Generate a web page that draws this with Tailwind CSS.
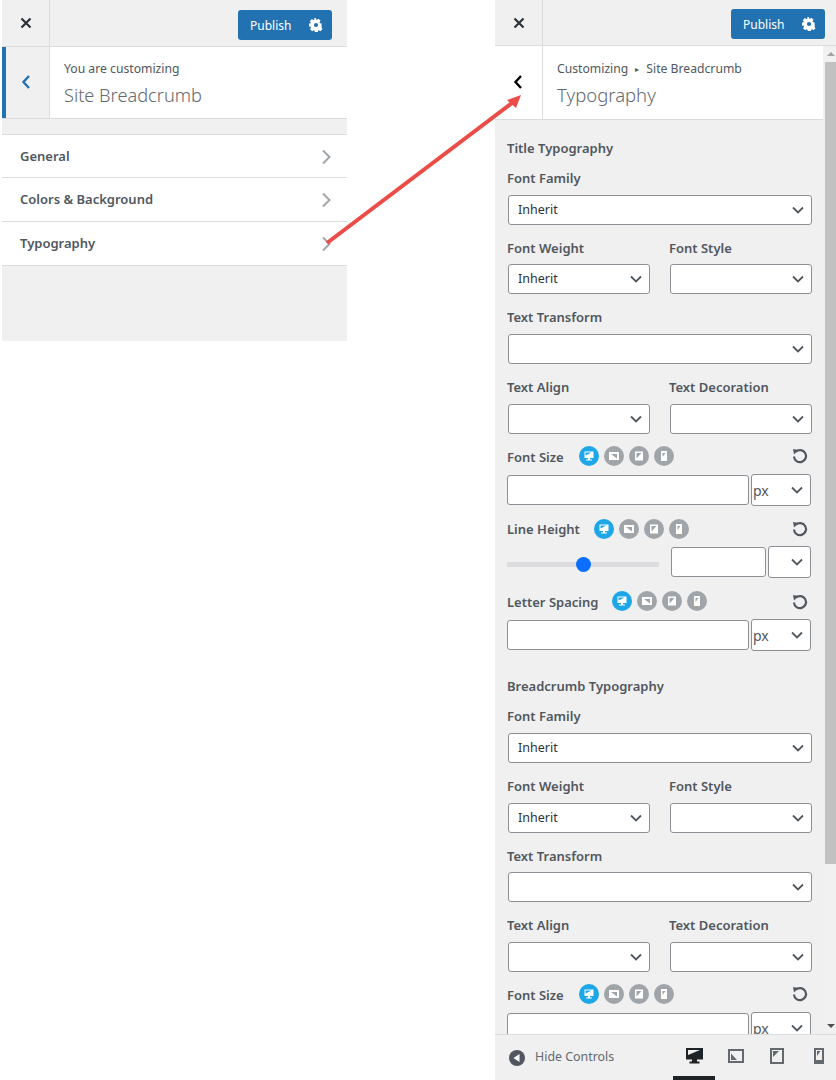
<!DOCTYPE html>
<html>
<head>
    <title>Site Breadcrumb Customizer</title>
    <script src="https://cdn.jsdelivr.net/npm/@tailwindcss/browser@4"></script>
</head>
<body class="bg-white m-0 p-0 font-['Noto_Sans',sans-serif] text-[13px] text-[#50575e]">
<div class="relative w-[836px] h-[1080px] overflow-hidden flex">

    <!-- Left panel -->
    <div class="ml-[2px] w-[345px] h-[341px] bg-[#f0f0f1]">
        <div class="h-[47px] flex items-center border-b border-[#dcdcde]">
            <div class="w-[48px] h-full flex items-center justify-center border-r border-[#dcdcde]">
                <svg class="w-[12px] h-[12px]" viewBox="0 0 12 12"><path d="M1.500 1.500l9 9M10.500 1.500l-9 9" stroke="#2c3338" stroke-width="2.200"/></svg>
            </div>
            <div class="ml-auto mr-[15px] mt-[4px] w-[94px] h-[30px] bg-[#2271b1] rounded-[3px] flex items-center text-white">
                <span class="ml-[12px] mt-[1px] text-[12px]">Publish</span>
                <svg class="ml-auto mr-[9px] w-[14px] h-[14px]" viewBox="0 0 20 20"><path fill="#fff" fill-rule="evenodd" d="M18 12.200v-4.400l-2.400-.4a6 6 0 0 0-.5-1.300l1.400-2-3-3-2 1.400a6 6 0 0 0-1.300-.5L9.800 0H7.800l-.4 2.400a6 6 0 0 0-1.300.5l-2-1.400-3 3 1.400 2a6 6 0 0 0-.5 1.300L0 7.800v4.400l2.400.4c.1.500.3.900.5 1.300l-1.400 2 3 3 2-1.400c.4.200.8.400 1.300.5l.4 2.400h4.400l.4-2.400c.5-.1.900-.3 1.300-.5l2 1.400 3-3-1.400-2c.2-.4.400-.8.5-1.300zM10 13a3 3 0 1 1 0-6 3 3 0 0 1 0 6z"/></svg>
            </div>
        </div>
        <div class="h-[72px] flex bg-white border-b border-[#dcdcde]">
            <div class="w-[48px] pr-[3px] flex items-center justify-center bg-[#f0f0f1] border-l-4 border-r border-l-[#2271b1] border-r-[#dcdcde]">
                <svg class="w-[10px] h-[16px] mb-[2px]" viewBox="0 0 10 16"><path d="M8 2L2.500 8 8 14" fill="none" stroke="#2271b1" stroke-width="2.400"/></svg>
            </div>
            <div class="pl-[14px] pt-[12px]">
                <div class="text-[12.200px] leading-[20px]">You are customizing</div>
                <div class="text-[18.200px] leading-[30px] mt-[1px] font-light text-[#646970]">Site Breadcrumb</div>
            </div>
        </div>
        <div class="mt-[15px] bg-white border-t border-[#dcdcde]">
            <div class="h-[43px] flex items-center justify-between pt-[1px] pl-[18px] pr-[16px] border-b border-[#dcdcde] text-[13px] font-semibold">
                <span>General</span>
                <svg class="w-[10px] h-[16px]" viewBox="0 0 10 16"><path d="M2 1.500L8.500 8 2 14.500" fill="none" stroke="#a0a5aa" stroke-width="2"/></svg>
            </div>
            <div class="h-[44px] flex items-center justify-between pl-[18px] pr-[16px] border-b border-[#dcdcde] text-[13px] font-semibold">
                <span>Colors &amp; Background</span>
                <svg class="w-[10px] h-[16px]" viewBox="0 0 10 16"><path d="M2 1.500L8.500 8 2 14.500" fill="none" stroke="#a0a5aa" stroke-width="2"/></svg>
            </div>
            <div class="h-[44px] flex items-center justify-between pl-[18px] pr-[16px] border-b border-[#dcdcde] text-[13px] font-semibold">
                <span>Typography</span>
                <svg class="w-[10px] h-[16px]" viewBox="0 0 10 16"><path d="M2 1.500L8.500 8 2 14.500" fill="none" stroke="#a0a5aa" stroke-width="2"/></svg>
            </div>
        </div>
    </div>

    <!-- Right panel -->
    <div class="ml-[148px] w-[341px] h-[1080px] bg-[#f0f0f1] flex flex-col">
        <div class="h-[46px] shrink-0 flex items-center border-b border-[#dcdcde]">
            <div class="w-[48px] h-full flex items-center justify-center border-r border-[#dcdcde]">
                <svg class="w-[12px] h-[12px]" viewBox="0 0 12 12"><path d="M1.500 1.500l9 9M10.500 1.500l-9 9" stroke="#2c3338" stroke-width="2.200"/></svg>
            </div>
            <div class="ml-auto mr-[11px] mt-[3px] w-[94px] h-[30px] bg-[#2271b1] rounded-[3px] flex items-center text-white">
                <span class="ml-[12px] mt-[1px] text-[12px]">Publish</span>
                <svg class="ml-auto mr-[9px] w-[14px] h-[14px]" viewBox="0 0 20 20"><path fill="#fff" fill-rule="evenodd" d="M18 12.200v-4.400l-2.400-.4a6 6 0 0 0-.5-1.300l1.400-2-3-3-2 1.400a6 6 0 0 0-1.300-.5L9.800 0H7.800l-.4 2.400a6 6 0 0 0-1.300.5l-2-1.400-3 3 1.400 2a6 6 0 0 0-.5 1.300L0 7.800v4.400l2.400.4c.1.500.3.900.5 1.300l-1.400 2 3 3 2-1.400c.4.200.8.400 1.300.5l.4 2.400h4.400l.4-2.400c.5-.1.900-.3 1.300-.5l2 1.400 3-3-1.400-2c.2-.4.400-.8.5-1.300zM10 13a3 3 0 1 1 0-6 3 3 0 0 1 0 6z"/></svg>
            </div>
        </div>

        <div class="h-[988px] shrink-0 flex overflow-hidden">
            <div class="w-[330px] shrink-0">
                <div class="w-[328px] h-[74px] flex bg-white border-b border-[#dcdcde]">
                    <div class="w-[48px] pr-[1px] flex items-center justify-center border-r border-[#dcdcde]">
                        <svg class="w-[10px] h-[16px] mb-[2px]" viewBox="0 0 10 16"><path d="M8 2L2.500 8 8 14" fill="none" stroke="#000" stroke-width="2.400"/></svg>
                    </div>
                    <div class="pl-[14px] pt-[13px]">
                        <div class="text-[12.200px] leading-[20px] flex items-center">Customizing<span class="mx-[7px] text-[8px]">▸</span>Site Breadcrumb</div>
                        <div class="text-[18.500px] leading-[30px] mt-[1px] font-light text-[#646970]">Typography</div>
                    </div>
                </div>

                <div class="pl-[12px] pr-[13px] text-[13px] font-semibold">
                    <div class="h-[20px] leading-[20px] mt-[18px]">Title Typography</div>
                    <div class="h-[20px] leading-[20px] mt-[10px]">Font Family</div>
                    <div class="ml-[1px] mt-[7px] h-[30px] flex items-center justify-between border border-[#8c8f94] rounded-[3px] bg-white pl-[9px] pr-[7px] font-normal text-[12.500px] text-[#2c3338]"><span class="mt-[1px]">Inherit</span><svg class="w-[12px] h-[8px]" viewBox="0 0 12 8"><path d="M1 1.500l5 5 5-5" fill="none" stroke="#50575e" stroke-width="1.800"/></svg></div>

                    <div class="mt-[13px] ml-[1px] grid grid-cols-2 gap-x-[20px]">
                        <div class="h-[20px] leading-[20px] -ml-[1px]">Font Weight</div>
                        <div class="h-[20px] leading-[20px] -ml-[1px]">Font Style</div>
                        <div class="mt-[6px] h-[30px] flex items-center justify-between border border-[#8c8f94] rounded-[3px] bg-white pl-[9px] pr-[7px] font-normal text-[12.500px] text-[#2c3338]"><span class="mt-[1px]">Inherit</span><svg class="w-[12px] h-[8px]" viewBox="0 0 12 8"><path d="M1 1.500l5 5 5-5" fill="none" stroke="#50575e" stroke-width="1.800"/></svg></div>
                        <div class="mt-[6px] h-[30px] flex items-center justify-end border border-[#8c8f94] rounded-[3px] bg-white pr-[7px]"><svg class="w-[12px] h-[8px]" viewBox="0 0 12 8"><path d="M1 1.500l5 5 5-5" fill="none" stroke="#50575e" stroke-width="1.800"/></svg></div>
                    </div>

                    <div class="h-[20px] leading-[20px] mt-[13px]">Text Transform</div>
                    <div class="ml-[1px] mt-[7px] h-[30px] flex items-center justify-end border border-[#8c8f94] rounded-[3px] bg-white pr-[7px]"><svg class="w-[12px] h-[8px]" viewBox="0 0 12 8"><path d="M1 1.500l5 5 5-5" fill="none" stroke="#50575e" stroke-width="1.800"/></svg></div>

                    <div class="mt-[13px] ml-[1px] grid grid-cols-2 gap-x-[20px]">
                        <div class="h-[20px] leading-[20px] -ml-[1px]">Text Align</div>
                        <div class="h-[20px] leading-[20px] -ml-[1px]">Text Decoration</div>
                        <div class="mt-[7px] h-[30px] flex items-center justify-end border border-[#8c8f94] rounded-[3px] bg-white pr-[7px]"><svg class="w-[12px] h-[8px]" viewBox="0 0 12 8"><path d="M1 1.500l5 5 5-5" fill="none" stroke="#50575e" stroke-width="1.800"/></svg></div>
                        <div class="mt-[7px] h-[30px] flex items-center justify-end border border-[#8c8f94] rounded-[3px] bg-white pr-[7px]"><svg class="w-[12px] h-[8px]" viewBox="0 0 12 8"><path d="M1 1.500l5 5 5-5" fill="none" stroke="#50575e" stroke-width="1.800"/></svg></div>
                    </div>

                    <!-- Font Size -->
                    <div class="mt-[13px] h-[20px] flex items-center">
                        <span class="mr-[15px] mt-[1px]">Font Size</span>
                        <div class="flex gap-[5px] -mt-[2px]">
                            <svg class="w-[20px] h-[20px]" viewBox="0 0 20 20"><circle cx="10" cy="10" r="10" fill="#1da6e8"/><path fill="#fff" fill-rule="evenodd" d="M5.500 5.500h9v6.500h-3.500v1.500h2v1h-6v-1h2V12H5.500zM6.500 6.500v3l6-3z"/></svg>
                            <svg class="w-[20px] h-[20px]" viewBox="0 0 20 20"><circle cx="10" cy="10" r="10" fill="#a0a5aa"/><path fill="#fff" d="M5 6h10v8H5zM7 8l6 4.500V8z" fill-rule="evenodd"/></svg>
                            <svg class="w-[20px] h-[20px]" viewBox="0 0 20 20"><circle cx="10" cy="10" r="10" fill="#a0a5aa"/><path fill="#fff" d="M6 5.500h8v9H6zM7.500 12.500L12.500 7H7.500z" fill-rule="evenodd"/></svg>
                            <svg class="w-[20px] h-[20px]" viewBox="0 0 20 20"><circle cx="10" cy="10" r="10" fill="#a0a5aa"/><path fill="#fff" d="M7 5h6v10H7zM8.500 11L11.500 7H8.500z" fill-rule="evenodd"/></svg>
                        </div>
                        <svg class="ml-auto mr-[4px] -mt-[2px] w-[16px] h-[16px]" viewBox="0 0 16 16"><path d="M3.800 3.800A6 6 0 1 1 2 8.500" fill="none" stroke="#50575e" stroke-width="2.200"/><path fill="#50575e" d="M1 1l5.500 1-4.500 4.500z"/></svg>
                    </div>
                    <div class="mt-[7px] flex items-center gap-[2px]">
                        <input class="w-[242px] h-[30px] border border-[#8c8f94] rounded-[3px] bg-white">
                        <div class="w-[60px] h-[32px] flex items-center justify-between border border-[#8c8f94] rounded-[3px] bg-white pl-[1px] pr-[7px] font-normal text-[14px]">px<svg class="w-[12px] h-[8px]" viewBox="0 0 12 8"><path d="M1 1.500l5 5 5-5" fill="none" stroke="#50575e" stroke-width="1.800"/></svg></div>
                    </div>

                    <!-- Line Height -->
                    <div class="mt-[13px] h-[20px] flex items-center">
                        <span class="mr-[14px] mt-[1px]">Line Height</span>
                        <div class="flex gap-[5px]">
                            <svg class="w-[20px] h-[20px]" viewBox="0 0 20 20"><circle cx="10" cy="10" r="10" fill="#1da6e8"/><path fill="#fff" fill-rule="evenodd" d="M5.500 5.500h9v6.500h-3.500v1.500h2v1h-6v-1h2V12H5.500zM6.500 6.500v3l6-3z"/></svg>
                            <svg class="w-[20px] h-[20px]" viewBox="0 0 20 20"><circle cx="10" cy="10" r="10" fill="#a0a5aa"/><path fill="#fff" d="M5 6h10v8H5zM7 8l6 4.500V8z" fill-rule="evenodd"/></svg>
                            <svg class="w-[20px] h-[20px]" viewBox="0 0 20 20"><circle cx="10" cy="10" r="10" fill="#a0a5aa"/><path fill="#fff" d="M6 5.500h8v9H6zM7.500 12.500L12.500 7H7.500z" fill-rule="evenodd"/></svg>
                            <svg class="w-[20px] h-[20px]" viewBox="0 0 20 20"><circle cx="10" cy="10" r="10" fill="#a0a5aa"/><path fill="#fff" d="M7 5h6v10H7zM8.500 11L11.500 7H8.500z" fill-rule="evenodd"/></svg>
                        </div>
                        <svg class="ml-auto mr-[4px] w-[16px] h-[16px]" viewBox="0 0 16 16"><path d="M3.800 3.800A6 6 0 1 1 2 8.500" fill="none" stroke="#50575e" stroke-width="2.200"/><path fill="#50575e" d="M1 1l5.500 1-4.500 4.500z"/></svg>
                    </div>
                    <div class="mt-[7px] flex items-center">
                        <div class="mt-[4px] w-[152px] h-[5px] bg-[#dcdcde] flex items-center">
                            <div class="ml-[69px] w-[15px] h-[15px] rounded-full bg-[#0b6efd]"></div>
                        </div>
                        <input class="ml-[12px] w-[95px] h-[30px] border border-[#8c8f94] rounded-[3px] bg-white">
                        <div class="ml-[2px] w-[43px] h-[32px] flex items-center justify-end border border-[#8c8f94] rounded-[3px] bg-white pr-[7px]"><svg class="w-[12px] h-[8px]" viewBox="0 0 12 8"><path d="M1 1.500l5 5 5-5" fill="none" stroke="#50575e" stroke-width="1.800"/></svg></div>
                    </div>

                    <!-- Letter Spacing -->
                    <div class="mt-[14px] h-[20px] flex items-center">
                        <span class="mr-[14px] mt-[1px]">Letter Spacing</span>
                        <div class="flex gap-[5px] -mt-[2px]">
                            <svg class="w-[20px] h-[20px]" viewBox="0 0 20 20"><circle cx="10" cy="10" r="10" fill="#1da6e8"/><path fill="#fff" fill-rule="evenodd" d="M5.500 5.500h9v6.500h-3.500v1.500h2v1h-6v-1h2V12H5.500zM6.500 6.500v3l6-3z"/></svg>
                            <svg class="w-[20px] h-[20px]" viewBox="0 0 20 20"><circle cx="10" cy="10" r="10" fill="#a0a5aa"/><path fill="#fff" d="M5 6h10v8H5zM7 8l6 4.500V8z" fill-rule="evenodd"/></svg>
                            <svg class="w-[20px] h-[20px]" viewBox="0 0 20 20"><circle cx="10" cy="10" r="10" fill="#a0a5aa"/><path fill="#fff" d="M6 5.500h8v9H6zM7.500 12.500L12.500 7H7.500z" fill-rule="evenodd"/></svg>
                            <svg class="w-[20px] h-[20px]" viewBox="0 0 20 20"><circle cx="10" cy="10" r="10" fill="#a0a5aa"/><path fill="#fff" d="M7 5h6v10H7zM8.500 11L11.500 7H8.500z" fill-rule="evenodd"/></svg>
                        </div>
                        <svg class="ml-auto mr-[4px] w-[16px] h-[16px]" viewBox="0 0 16 16"><path d="M3.800 3.800A6 6 0 1 1 2 8.500" fill="none" stroke="#50575e" stroke-width="2.200"/><path fill="#50575e" d="M1 1l5.500 1-4.500 4.500z"/></svg>
                    </div>
                    <div class="mt-[7px] flex items-center gap-[2px]">
                        <input class="w-[242px] h-[30px] border border-[#8c8f94] rounded-[3px] bg-white">
                        <div class="w-[60px] h-[32px] flex items-center justify-between border border-[#8c8f94] rounded-[3px] bg-white pl-[1px] pr-[7px] font-normal text-[14px]">px<svg class="w-[12px] h-[8px]" viewBox="0 0 12 8"><path d="M1 1.500l5 5 5-5" fill="none" stroke="#50575e" stroke-width="1.800"/></svg></div>
                    </div>

                    <!-- Breadcrumb typography -->
                    <div class="h-[20px] leading-[20px] mt-[25px]">Breadcrumb Typography</div>
                    <div class="h-[20px] leading-[20px] mt-[10px]">Font Family</div>
                    <div class="ml-[1px] mt-[7px] h-[30px] flex items-center justify-between border border-[#8c8f94] rounded-[3px] bg-white pl-[9px] pr-[7px] font-normal text-[12.500px] text-[#2c3338]"><span class="mt-[1px]">Inherit</span><svg class="w-[12px] h-[8px]" viewBox="0 0 12 8"><path d="M1 1.500l5 5 5-5" fill="none" stroke="#50575e" stroke-width="1.800"/></svg></div>

                    <div class="mt-[13px] ml-[1px] grid grid-cols-2 gap-x-[20px]">
                        <div class="h-[20px] leading-[20px] -ml-[1px]">Font Weight</div>
                        <div class="h-[20px] leading-[20px] -ml-[1px]">Font Style</div>
                        <div class="mt-[7px] h-[30px] flex items-center justify-between border border-[#8c8f94] rounded-[3px] bg-white pl-[9px] pr-[7px] font-normal text-[12.500px] text-[#2c3338]"><span class="mt-[1px]">Inherit</span><svg class="w-[12px] h-[8px]" viewBox="0 0 12 8"><path d="M1 1.500l5 5 5-5" fill="none" stroke="#50575e" stroke-width="1.800"/></svg></div>
                        <div class="mt-[7px] h-[30px] flex items-center justify-end border border-[#8c8f94] rounded-[3px] bg-white pr-[7px]"><svg class="w-[12px] h-[8px]" viewBox="0 0 12 8"><path d="M1 1.500l5 5 5-5" fill="none" stroke="#50575e" stroke-width="1.800"/></svg></div>
                    </div>

                    <div class="h-[20px] leading-[20px] mt-[13px]">Text Transform</div>
                    <div class="ml-[1px] mt-[6px] h-[30px] flex items-center justify-end border border-[#8c8f94] rounded-[3px] bg-white pr-[7px]"><svg class="w-[12px] h-[8px]" viewBox="0 0 12 8"><path d="M1 1.500l5 5 5-5" fill="none" stroke="#50575e" stroke-width="1.800"/></svg></div>

                    <div class="mt-[13px] ml-[1px] grid grid-cols-2 gap-x-[20px]">
                        <div class="h-[20px] leading-[20px] -ml-[1px]">Text Align</div>
                        <div class="h-[20px] leading-[20px] -ml-[1px]">Text Decoration</div>
                        <div class="mt-[7px] h-[30px] flex items-center justify-end border border-[#8c8f94] rounded-[3px] bg-white pr-[7px]"><svg class="w-[12px] h-[8px]" viewBox="0 0 12 8"><path d="M1 1.500l5 5 5-5" fill="none" stroke="#50575e" stroke-width="1.800"/></svg></div>
                        <div class="mt-[7px] h-[30px] flex items-center justify-end border border-[#8c8f94] rounded-[3px] bg-white pr-[7px]"><svg class="w-[12px] h-[8px]" viewBox="0 0 12 8"><path d="M1 1.500l5 5 5-5" fill="none" stroke="#50575e" stroke-width="1.800"/></svg></div>
                    </div>

                    <div class="mt-[13px] h-[20px] flex items-center">
                        <span class="mr-[15px] mt-[1px]">Font Size</span>
                        <div class="flex gap-[5px] -mt-[2px]">
                            <svg class="w-[20px] h-[20px]" viewBox="0 0 20 20"><circle cx="10" cy="10" r="10" fill="#1da6e8"/><path fill="#fff" fill-rule="evenodd" d="M5.500 5.500h9v6.500h-3.500v1.500h2v1h-6v-1h2V12H5.500zM6.500 6.500v3l6-3z"/></svg>
                            <svg class="w-[20px] h-[20px]" viewBox="0 0 20 20"><circle cx="10" cy="10" r="10" fill="#a0a5aa"/><path fill="#fff" d="M5 6h10v8H5zM7 8l6 4.500V8z" fill-rule="evenodd"/></svg>
                            <svg class="w-[20px] h-[20px]" viewBox="0 0 20 20"><circle cx="10" cy="10" r="10" fill="#a0a5aa"/><path fill="#fff" d="M6 5.500h8v9H6zM7.500 12.500L12.500 7H7.500z" fill-rule="evenodd"/></svg>
                            <svg class="w-[20px] h-[20px]" viewBox="0 0 20 20"><circle cx="10" cy="10" r="10" fill="#a0a5aa"/><path fill="#fff" d="M7 5h6v10H7zM8.500 11L11.500 7H8.500z" fill-rule="evenodd"/></svg>
                        </div>
                        <svg class="ml-auto mr-[4px] -mt-[2px] w-[16px] h-[16px]" viewBox="0 0 16 16"><path d="M3.800 3.800A6 6 0 1 1 2 8.500" fill="none" stroke="#50575e" stroke-width="2.200"/><path fill="#50575e" d="M1 1l5.500 1-4.500 4.500z"/></svg>
                    </div>
                    <div class="mt-[8px] flex items-start gap-[2px]">
                        <input class="w-[242px] h-[30px] border border-[#8c8f94] rounded-[3px] bg-white">
                        <div class="w-[60px] h-[32px] -mt-[1px] flex items-center justify-between border border-[#8c8f94] rounded-[3px] bg-white pl-[1px] pr-[7px] font-normal text-[14px]">px<svg class="w-[12px] h-[8px]" viewBox="0 0 12 8"><path d="M1 1.500l5 5 5-5" fill="none" stroke="#50575e" stroke-width="1.800"/></svg></div>
                    </div>
                </div>
            </div>

            <!-- Scrollbar -->
            <div class="w-[11px] ml-auto bg-[#f1f1f1] flex flex-col items-center">
                <div class="h-[16px] flex items-center"><div class="w-0 h-0 border-x-[4px] border-x-transparent border-b-[4px] border-b-[#a3a3a3]"></div></div>
                <div class="w-full h-[802px] bg-[#c1c1c1]"></div>
                <div class="mt-auto h-[16px] flex items-center"><div class="w-0 h-0 border-x-[4px] border-x-transparent border-t-[4px] border-t-[#505050]"></div></div>
            </div>
        </div>

        <!-- Footer -->
        <div class="h-[46px] shrink-0 flex border-t border-[#dcdcde] text-[#646970]">
            <div class="flex items-center pl-[14px]">
                <svg class="w-[16px] h-[16px]" viewBox="0 0 16 16"><circle cx="8" cy="8" r="8" fill="#50575e"/><path fill="#fff" d="M10.500 4v8L4.500 8z"/></svg>
                <span class="ml-[10px] text-[12.400px]">Hide Controls</span>
            </div>
            <div class="ml-auto flex w-[163px]">
                <div class="w-[42px] flex items-center justify-center border-b-4 border-[#1d2327]">
                    <svg class="w-[17px] h-[16px]" viewBox="0 0 17 16"><path fill="#1d2327" fill-rule="evenodd" d="M0 0h17v11.500h-6v2h2.500V15.500h-10V13.500H6v-2H0zM2 2v5L14 2z"/></svg>
                </div>
                <div class="w-[41px] flex items-center justify-center pb-[4px]">
                    <svg class="w-[16px] h-[14px]" viewBox="0 0 16 14"><path fill="#646970" fill-rule="evenodd" d="M0 0h16v14H0zM2 2v10h12V2zM3 4.500L9 11H3z"/></svg>
                </div>
                <div class="w-[42px] flex items-center justify-center pb-[4px]">
                    <svg class="w-[14px] h-[16px]" viewBox="0 0 14 16"><path fill="#646970" fill-rule="evenodd" d="M0 0h14v16H0zM2 2v12h10V2zM3 3h6l-6 6z"/></svg>
                </div>
                <div class="w-[38px] pl-[3px] flex items-center justify-center pb-[4px]">
                    <svg class="w-[10px] h-[16px]" viewBox="0 0 10 16"><path fill="#646970" fill-rule="evenodd" d="M0 0h10v16H0zM2 2v10h6V2zM3 3h3.500L3 8z"/></svg>
                </div>
            </div>
        </div>
    </div>

    <!-- Annotation arrow over the panels -->
    <svg class="absolute left-0 top-0 pointer-events-none" width="836" height="1080" viewBox="0 0 836 1080">
        <path d="M327 243L512 103" stroke="#ec4c47" stroke-width="4" fill="none"/>
        <path fill="#ec4c47" d="M521 95L516 108L507 100z"/>
    </svg>
</div>
</body>
</html>
